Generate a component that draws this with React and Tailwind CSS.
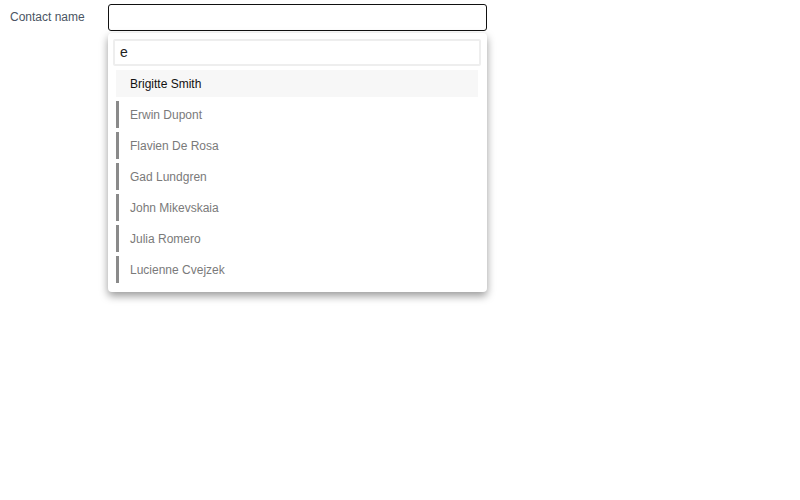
const contacts = [
    "Erwin Dupont",
    "Flavien De Rosa",
    "Gad Lundgren",
    "John Mikevskaia",
    "Julia Romero",
    "Lucienne Cvejzek",
];

export default function App() {
    return (
        <div className="min-h-[500px] bg-white flex items-start pt-[4px] pl-[10px] font-['Liberation_Sans',Arial,sans-serif]">
            <label className="w-[98px] pt-[4px] text-[12px] text-[#4b5563]">Contact name</label>
            <div className="w-[379px]">
                <div className="h-[27px] border border-[#111] rounded-[3px] bg-white" />
                <div className="mt-[2px] rounded-[4px] bg-white shadow-[0_4px_8px_rgba(0,0,0,0.4)] pt-[6px] pl-[5px] pr-[6px] pb-[9px]">
                    <div className="h-[27px] border-2 border-[#eee] rounded-[2px] pl-[5px] flex items-center text-[14px] text-[#222]">
                        e
                    </div>
                    <ul className="mt-[4px] mx-[3px] flex flex-col gap-[4px]">
                        <li className="h-[27px] flex items-center pl-[14px] bg-[#f7f7f7] text-[12px] text-[#111]">
                            Brigitte Smith
                        </li>
                        {contacts.map((name) => (
                            <li
                                key={name}
                                className="h-[27px] flex items-center pl-[11px] border-l-[3px] border-[#8a8a8a] text-[12px] text-[#7a7a7a]"
                            >
                                {name}
                            </li>
                        ))}
                    </ul>
                </div>
            </div>
        </div>
    );
}
